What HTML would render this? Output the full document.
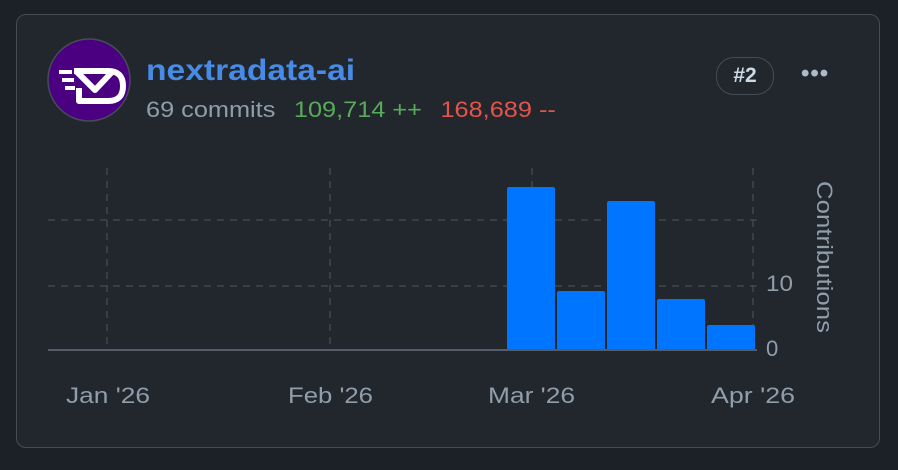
<!DOCTYPE html>
<html><head><style>
body{margin:0;width:898px;height:470px;background:#1c2128;font-family:"Liberation Sans",sans-serif;overflow:hidden;position:relative}
.card{position:absolute;left:16px;top:14px;width:862px;height:432px;border:1px solid #444c56;border-radius:10px;background:#22272e}
.t{position:absolute;white-space:nowrap}
</style></head><body>
<div class="card"></div>
<svg class="t" style="left:47px;top:38px" width="84" height="84" viewBox="0 0 84 84">
<circle cx="42" cy="42" r="41" fill="#4b0082" stroke="#444c56" stroke-width="1.5"/>
<g stroke="#fff" stroke-width="6" fill="none" stroke-linejoin="round">
<path d="M27 33 L61 33 Q76 33 76 48 Q76 63 61 63 L32 63 L32 50"/>
<path d="M30 34 L48 52 L65 34"/>
</g>
<g stroke="#fff" stroke-width="4"><path d="M12 34H25M15 42H27M18 50H28"/></g>
</svg>
<div class="t" style="left:146px;top:54px;font-size:30px;font-weight:bold;color:#478be6;transform:scaleX(1.12);transform-origin:left">nextradata-ai</div>
<div class="t" style="left:146px;top:97px;font-size:22px;color:#909dab;transform:scaleX(1.15);transform-origin:left">69 commits <span style="color:#57ab5a;margin-left:10px">109,714 ++</span> <span style="color:#e5534b;margin-left:10px">168,689 --</span></div>
<div class="t" style="left:716px;top:57px;width:56px;height:36px;border:1px solid #444c56;border-radius:18px;color:#cdd9e5;font-size:21px;font-weight:bold;text-align:center;line-height:36px">#2</div>
<div class="t" style="left:801px;top:60px;font-size:24px;color:#adbac7;letter-spacing:1px;font-weight:bold">•••</div>
<svg class="t" style="left:0;top:0" width="898" height="470">
<g stroke="#444c56" stroke-width="1.3" stroke-dasharray="7,6">
<path d="M107 168V350M330 168V350M532 168V350M753 168V350M48 220H757M48 286H757"/>
</g>
<g fill="#0075ff">
<rect x="507" y="187" width="48" height="163" rx="2"/>
<rect x="557" y="291" width="48" height="59" rx="2"/>
<rect x="607" y="201" width="48" height="149" rx="2"/>
<rect x="657" y="299" width="48" height="51" rx="2"/>
<rect x="707" y="325" width="48" height="25" rx="2"/>
</g>
<path d="M48 350H757" stroke="#545d68" stroke-width="2"/>
<g fill="#909dab" font-family="Liberation Sans" font-size="22">
<text x="766" y="291" textLength="27" lengthAdjust="spacingAndGlyphs">10</text>
<text x="766" y="356">0</text>
<text x="66" y="403" textLength="84" lengthAdjust="spacingAndGlyphs">Jan '26</text>
<text x="288" y="403" textLength="85" lengthAdjust="spacingAndGlyphs">Feb '26</text>
<text x="488" y="403" textLength="87" lengthAdjust="spacingAndGlyphs">Mar '26</text>
<text x="711" y="403" textLength="84" lengthAdjust="spacingAndGlyphs">Apr '26</text>
<text transform="translate(817,181) rotate(90)" textLength="152" lengthAdjust="spacingAndGlyphs">Contributions</text>
</g>
</svg>
</body></html>
